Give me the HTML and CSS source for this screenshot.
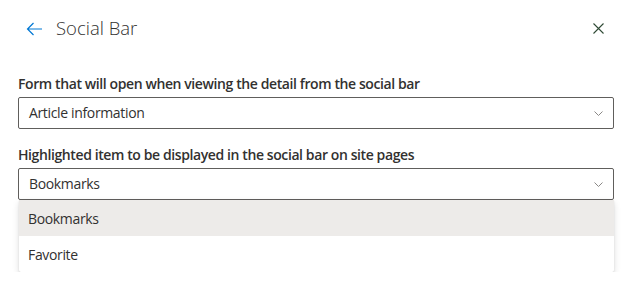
FILE: index.html
```html
<!DOCTYPE html>
<html lang="en">
<head>
    <meta charset="UTF-8">
    <meta name="viewport" content="width=device-width, initial-scale=1.0">
    <title>Social Bar</title>
    <link rel="stylesheet" href="styles.css">
</head>
<body>
    <div class="panel">
        <div class="panel-header">
            <button class="icon-btn back-btn" aria-label="Back">
                <svg width="17" height="14" viewBox="0 0 17 14">
                    <path d="M16 7H1.5M7.5 1L1.5 7l6 6" fill="none" stroke="#0078d4" stroke-width="1.2"/>
                </svg>
            </button>
            <h1 class="panel-title">Social Bar</h1>
            <button class="icon-btn close-btn" aria-label="Close">
                <svg width="11" height="11" viewBox="0 0 11 11">
                    <path d="M0.5 0.5l10 10M10.5 0.5l-10 10" fill="none" stroke="#2f4a35" stroke-width="1.1"/>
                </svg>
            </button>
        </div>

        <div class="form-group">
            <label class="field-label">Form that will open when viewing the detail from the social bar</label>
            <div class="dropdown">
                <span class="dropdown-value">Article information</span>
                <svg class="chevron" width="9" height="5" viewBox="0 0 9 5">
                    <path d="M0.5 0.5l4 4 4-4" fill="none" stroke="#8a8886" stroke-width="1"/>
                </svg>
            </div>
        </div>

        <div class="form-group">
            <label class="field-label">Highlighted item to be displayed in the social bar on site pages</label>
            <div class="dropdown">
                <span class="dropdown-value">Bookmarks</span>
                <svg class="chevron" width="9" height="5" viewBox="0 0 9 5">
                    <path d="M0.5 0.5l4 4 4-4" fill="none" stroke="#8a8886" stroke-width="1"/>
                </svg>
            </div>
            <div class="option-list">
                <div class="option selected">Bookmarks</div>
                <div class="option">Favorite</div>
            </div>
        </div>
    </div>
</body>
</html>
```

FILE: styles.css
```css
* {
    margin: 0;
    padding: 0;
    box-sizing: border-box;
}

body {
    font-family: "Open Sans", "Segoe UI", sans-serif;
    background: #fff;
    color: #323130;
}

.panel {
    width: 638px;
    padding: 0 24px 0 18px;
}

.panel-header {
    display: flex;
    align-items: center;
    height: 56px;
    padding-top: 1px;
}

.icon-btn {
    background: none;
    border: none;
    display: flex;
    align-items: center;
    justify-content: center;
    cursor: pointer;
}

.back-btn {
    width: 24px;
    height: 24px;
    margin-left: 8px;
    margin-right: 6px;
    justify-content: flex-start;
}

.panel-title {
    font-size: 18.5px;
    font-weight: 300;
    line-height: 26px;
    color: #323130;
    flex: 1;
    margin-top: -1px;
}

.close-btn {
    width: 24px;
    height: 24px;
    margin-right: 4px;
    margin-top: -1px;
}

.form-group {
    margin-top: 18px;
}

.form-group + .form-group {
    margin-top: 16px;
}

.field-label {
    display: block;
    font-size: 14px;
    font-weight: 600;
    letter-spacing: -0.4px;
    line-height: 20px;
    margin-bottom: 3px;
    color: #323130;
}

.dropdown {
    display: flex;
    align-items: center;
    height: 32px;
    border: 1px solid #605e5c;
    border-radius: 2px;
    padding: 0 10px;
    background: #fff;
}

.dropdown-value {
    flex: 1;
    font-size: 14px;
    letter-spacing: -0.35px;
    line-height: 20px;
    margin-top: -1px;
}

.option-list {
    margin-left: 1px;
    background: #fff;
    box-shadow: 0 3px 7px rgba(0, 0, 0, 0.13), 0 1px 2px rgba(0, 0, 0, 0.11);
    border-radius: 0 0 2px 2px;
}

.option {
    height: 36px;
    display: flex;
    align-items: center;
    padding-left: 9px;
    font-size: 14px;
    letter-spacing: -0.35px;
    color: #323130;
}

.option.selected {
    background: #edebe9;
}
```
